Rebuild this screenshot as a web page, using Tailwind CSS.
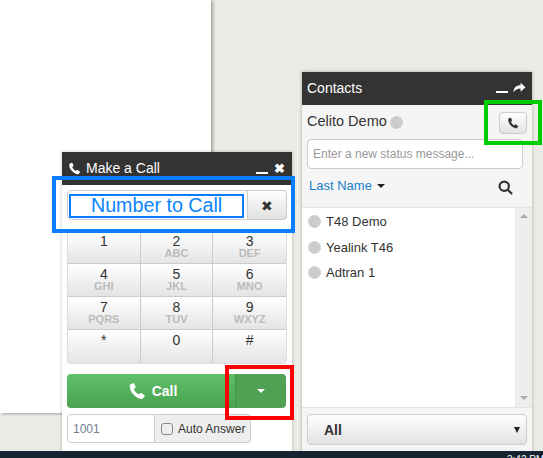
<!DOCTYPE html>
<html lang="en">
<head>
  <meta charset="UTF-8" />
  <title>Make a Call</title>
  <script src="https://cdn.jsdelivr.net/npm/@tailwindcss/browser@4"></script>
</head>
<body class="bg-[#ebebe5] font-['Liberation_Sans',sans-serif] text-[#333]">
  <div class="relative w-[543px] h-[458px] overflow-hidden">

    <!-- Page behind the windows -->
    <div class="absolute left-0 top-0 w-[211px] h-[413px] bg-white shadow-[2px_1px_3px_rgba(0,0,0,0.3)]"></div>

    <!-- Make a Call -->
    <div class="absolute left-[62px] top-[152px] w-[230px] h-[300px] bg-white shadow-[0_0_3px_rgba(0,0,0,0.25)]">
      <div class="flex items-center h-[33px] bg-[#333] text-white text-sm px-[6px] pb-[1px]">
        <svg class="w-[13px] h-[13px] mr-[5px]" viewBox="0 0 24 24" fill="#fff"><path d="M6.600 1.500 2.500 3.600C1.200 9 6 20 18.500 23l3.600-3.600c.5-.5.4-1.200-.1-1.600l-4.200-3c-.5-.4-1.100-.3-1.500.1l-1.700 1.800c-3-1.400-5.600-4.400-6.800-7.400l2-1.500c.5-.4.6-1 .3-1.500L8 1.900c-.3-.5-.9-.7-1.400-.4z"/></svg>
        <span class="flex-1">Make a Call</span>
        <span class="w-3 h-[2px] bg-white mt-[9px] mr-[6px]"></span>
        <span class="text-[13px] leading-none font-bold mr-[1px]">✖</span>
      </div>

      <div class="px-[5px]">
        <div class="flex mt-[5px] h-[30px]">
          <div class="flex items-center justify-center w-[182px] bg-white border border-[#ccc] rounded-l text-[19.700px] text-[#0a84ff] pr-[2px] pt-[2px]">Number to Call</div>
          <div class="flex items-center justify-center w-[39px] bg-gradient-to-b from-white to-[#e0e0e0] border border-l-0 border-[#ccc] rounded-r text-[#333] text-sm pt-[1px]">✖</div>
        </div>

        <div class="grid grid-cols-3 w-[220px] mt-[13px] border border-t-0 border-[#ddd] rounded-b overflow-hidden text-center text-sm leading-none">
          <div class="h-[31px] bg-gradient-to-b from-white to-[#e4e4e4] border-r border-b border-[#ccc] pt-[1px]">1</div>
          <div class="h-[31px] bg-gradient-to-b from-white to-[#e4e4e4] border-r border-b border-[#ccc] pt-[1px]">2<div class="text-[11px] font-bold text-[#bbb] leading-[11px]">ABC</div></div>
          <div class="h-[31px] bg-gradient-to-b from-white to-[#e4e4e4] border-b border-[#ccc] pt-[1px]">3<div class="text-[11px] font-bold text-[#bbb] leading-[11px]">DEF</div></div>
          <div class="h-[33px] bg-gradient-to-b from-white to-[#e4e4e4] border-r border-b border-[#ccc] pt-[3px]">4<div class="text-[11px] font-bold text-[#bbb] leading-[11px]">GHI</div></div>
          <div class="h-[33px] bg-gradient-to-b from-white to-[#e4e4e4] border-r border-b border-[#ccc] pt-[3px]">5<div class="text-[11px] font-bold text-[#bbb] leading-[11px]">JKL</div></div>
          <div class="h-[33px] bg-gradient-to-b from-white to-[#e4e4e4] border-b border-[#ccc] pt-[3px]">6<div class="text-[11px] font-bold text-[#bbb] leading-[11px]">MNO</div></div>
          <div class="h-[33px] bg-gradient-to-b from-white to-[#e4e4e4] border-r border-b border-[#ccc] pt-[3px]">7<div class="text-[11px] font-bold text-[#bbb] leading-[11px]">PQRS</div></div>
          <div class="h-[33px] bg-gradient-to-b from-white to-[#e4e4e4] border-r border-b border-[#ccc] pt-[3px]">8<div class="text-[11px] font-bold text-[#bbb] leading-[11px]">TUV</div></div>
          <div class="h-[33px] bg-gradient-to-b from-white to-[#e4e4e4] border-b border-[#ccc] pt-[3px]">9<div class="text-[11px] font-bold text-[#bbb] leading-[11px]">WXYZ</div></div>
          <div class="h-[33px] bg-gradient-to-b from-white to-[#e4e4e4] border-r border-[#ccc] pt-[3px]">*</div>
          <div class="h-[33px] bg-gradient-to-b from-white to-[#e4e4e4] border-r border-[#ccc] pt-[3px]">0</div>
          <div class="h-[33px] bg-gradient-to-b from-white to-[#e4e4e4] border-[#ccc] pt-[3px]">#</div>
        </div>

        <div class="flex w-[219px] h-[34px] mt-[10px] rounded overflow-hidden">
          <div class="flex items-center justify-center w-[169px] bg-gradient-to-b from-[#5fc068] to-[#4aa24f] text-white text-sm font-bold border-r border-[#45924a] pl-[3px]">
            <svg class="w-[18px] h-[18px] mr-[6px]" viewBox="0 0 24 24" fill="#fff"><path d="M6.600 1.500 2.500 3.600C1.200 9 6 20 18.500 23l3.600-3.600c.5-.5.4-1.200-.1-1.600l-4.200-3c-.5-.4-1.100-.3-1.500.1l-1.700 1.800c-3-1.400-5.600-4.400-6.800-7.400l2-1.500c.5-.4.6-1 .3-1.500L8 1.900c-.3-.5-.9-.7-1.400-.4z"/></svg>
            Call
          </div>
          <div class="flex items-center justify-center flex-1 bg-[#4fa254]">
            <span class="w-0 h-0 border-x-[4px] border-x-transparent border-t-[4px] border-t-white"></span>
          </div>
        </div>

        <div class="flex w-[184px] h-[29px] mt-[6px] text-xs">
          <div class="flex items-center w-[88px] bg-white border border-[#ccc] rounded-l pl-[5px] text-[#6f7f90]">1001</div>
          <div class="flex items-center flex-1 bg-[#eee] border border-l-0 border-[#ccc] rounded-r pl-[6px]">
            <span class="w-3 h-3 mr-[5px] bg-[#eee] border border-[#888] rounded-[3px]"></span>
            Auto Answer
          </div>
        </div>
      </div>
    </div>

    <!-- Contacts -->
    <div class="absolute left-[302px] top-[72px] flex flex-col w-[230px] h-[380px] bg-[#f5f5f5] shadow-[0_0_3px_rgba(0,0,0,0.3)]">
      <div class="flex items-center h-[33px] bg-[#333] text-white text-sm px-[5px] pb-[2px]">
        <span class="flex-1">Contacts</span>
        <span class="w-3 h-[2px] bg-white mt-[9px] mr-[5px]"></span>
        <svg class="w-[13px] h-[13px] mr-[1px]" viewBox="0 0 24 24" fill="#fff"><path d="M14 3v5C6 8 1 12 1 21c3-5 7-7 13-7v6l9-8.500z"/></svg>
      </div>

      <div class="flex items-center h-[34px] pl-[5px] text-[14.500px]">
        <span>Celito Demo</span>
        <span class="w-[13px] h-[13px] ml-[3px] rounded-full bg-[#ccc] border border-[#d0d0d0]"></span>
        <div class="flex items-center justify-center self-start w-[28px] h-[22px] mt-[7px] ml-auto mr-[5px] bg-gradient-to-b from-white to-[#e2e2e2] border border-[#ccc] rounded">
          <svg class="w-3 h-3" viewBox="0 0 24 24" fill="#333"><path d="M6.600 1.500 2.500 3.600C1.200 9 6 20 18.500 23l3.600-3.600c.5-.5.4-1.200-.1-1.600l-4.200-3c-.5-.4-1.100-.3-1.500.1l-1.700 1.800c-3-1.400-5.600-4.400-6.800-7.400l2-1.500c.5-.4.6-1 .3-1.500L8 1.900c-.3-.5-.9-.7-1.400-.4z"/></svg>
        </div>
      </div>

      <div class="flex items-center h-[30px] w-[216px] ml-[5px] bg-white border border-[#ccc] rounded text-xs text-[#999] pl-[5px]">Enter a new status message...</div>

      <div class="flex items-center h-[38px] pl-[7px] pr-[19px] pb-[5px] text-[13px] text-[#1a7fc9]">
        <span>Last Name</span>
        <span class="w-0 h-0 ml-[5px] border-x-[4px] border-x-transparent border-t-[4px] border-t-[#222]"></span>
        <svg class="w-[15px] h-[15px] ml-auto mt-[4px]" viewBox="0 0 24 24" fill="none" stroke="#333" stroke-width="3.500"><circle cx="10" cy="10" r="7.500"/><path d="m15.500 15.500 7 7"/></svg>
      </div>

      <div class="flex h-[201px] bg-white border-y border-[#e3e3e3] text-[13px]">
        <div class="flex-1 pl-[6px] pt-[1px]">
          <div class="flex items-center h-[25.500px]"><span class="w-[13px] h-[13px] mr-[5px] rounded-full bg-[#ccc] border border-[#d0d0d0]"></span>T48 Demo</div>
          <div class="flex items-center h-[25.500px]"><span class="w-[13px] h-[13px] mr-[5px] rounded-full bg-[#ccc] border border-[#d0d0d0]"></span>Yealink T46</div>
          <div class="flex items-center h-[25.500px]"><span class="w-[13px] h-[13px] mr-[5px] rounded-full bg-[#ccc] border border-[#d0d0d0]"></span>Adtran 1</div>
        </div>
        <div class="flex flex-col items-center justify-between w-[17px] bg-[#eee] pt-[6px] pb-[7px]">
          <span class="w-0 h-0 border-x-[4px] border-x-transparent border-b-[4px] border-b-[#aaa]"></span>
          <span class="w-0 h-0 border-x-[4px] border-x-transparent border-t-[4px] border-t-[#aaa]"></span>
        </div>
      </div>

      <div class="flex items-center w-[220px] h-[31px] ml-[5px] mt-[6px] bg-gradient-to-b from-white to-[#e2e2e2] border border-[#ccc] rounded text-sm font-bold pl-[16px] pr-[6px]">
        <span class="flex-1">All</span>
        <span class="w-0 h-0 border-x-[3px] border-x-transparent border-t-[6px] border-t-[#222]"></span>
      </div>
    </div>

    <!-- Taskbar, its clock is cut off by the bottom edge -->
    <div class="absolute left-0 top-[451px] w-[543px] h-[7px] bg-[#172330] overflow-hidden">
      <span class="absolute left-[507px] top-[4px] text-[10px] leading-none text-white whitespace-nowrap">3:42 PM</span>
    </div>

    <!-- Annotations -->
    <div class="absolute left-[52px] top-[176px] w-[243px] h-[57px] border-4 border-[#0a7cff]"></div>
    <div class="absolute left-[69px] top-[194px] w-[175px] h-[24px] border-2 border-[#0a7cff]"></div>
    <div class="absolute left-[225px] top-[365px] w-[69px] h-[55px] border-4 border-[#f00]"></div>
    <div class="absolute left-[484px] top-[100px] w-[58px] h-[45px] border-4 border-[#0c0]"></div>
  </div>
</body>
</html>
